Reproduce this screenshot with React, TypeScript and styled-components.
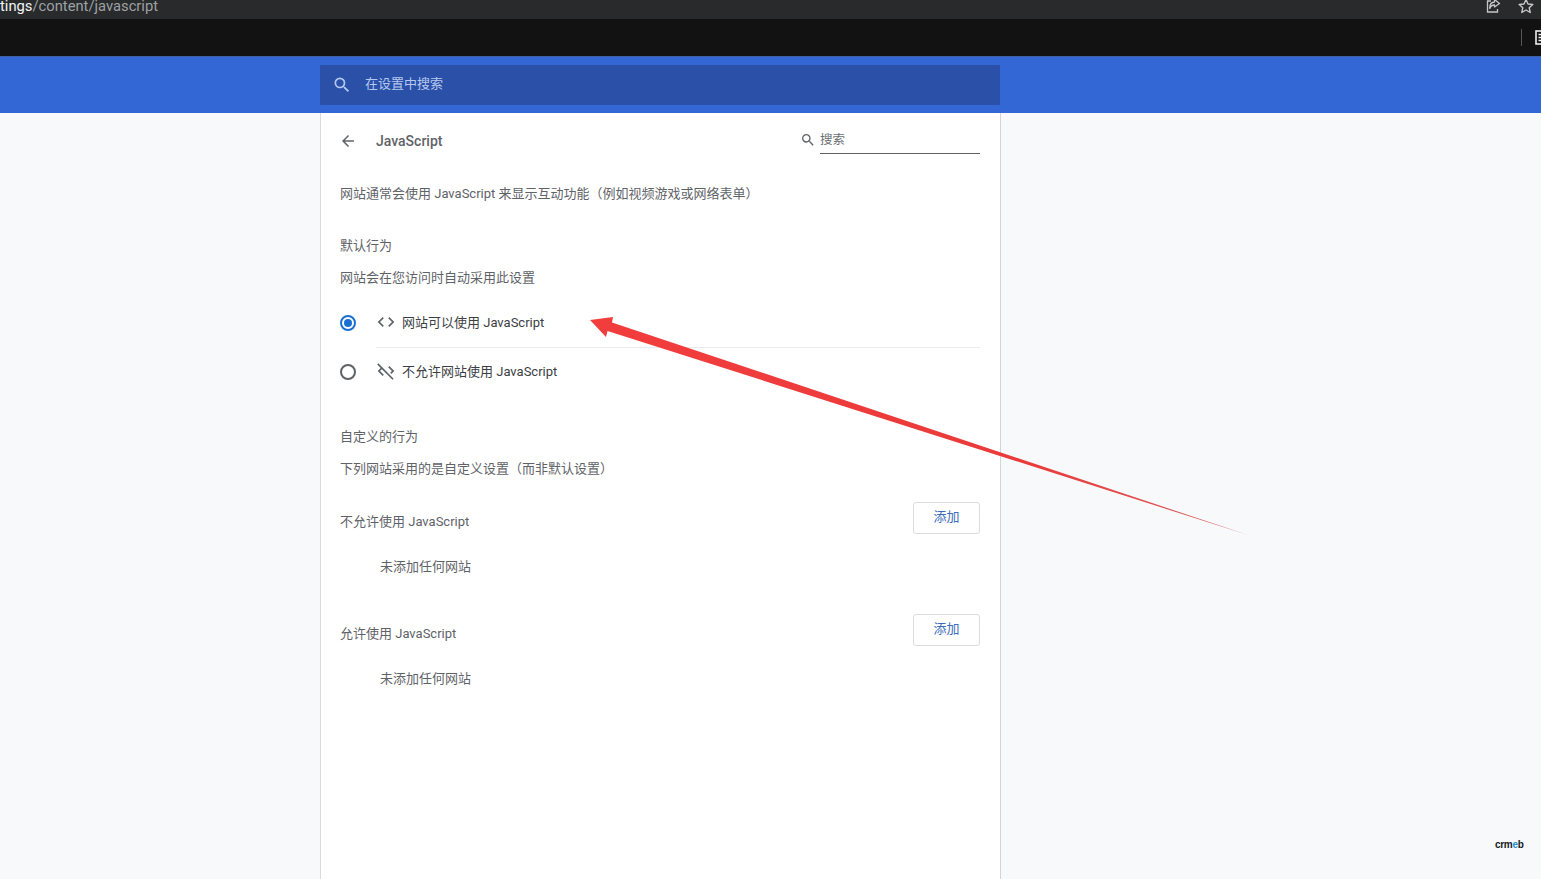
import React from "react";
import styled, { createGlobalStyle } from "styled-components";

const Global = createGlobalStyle`
  html, body { margin: 0; padding: 0; background: #f8f9fb; }
  body { font-family: Roboto, "Noto Sans CJK SC", sans-serif; overflow: hidden; }
  * { box-sizing: border-box; }
`;

const Page = styled.div`
  position: relative;
  width: 1541px;
  height: 879px;
  overflow: hidden;
  display: flex;
  flex-direction: column;
`;

const UrlBar = styled.div`
  height: 19px;
  flex: none;
  background: #292a2c;
  display: flex;
  justify-content: space-between;
  align-items: flex-end;
  overflow: hidden;
`;

const Url = styled.div`
  font: 14.75px/17px Roboto, sans-serif;
  color: #9ea1a5;
  padding-bottom: 4px;
  b { font-weight: 400; color: #f1f3f4; }
`;

const UrlActions = styled.div`
  display: flex;
  gap: 17px;
  padding: 0 7px 5px 0;
  color: #c4c7c9;
  svg { display: block; }
`;

const ExtBar = styled.div`
  height: 37px;
  flex: none;
  background: #121212;
  display: flex;
  justify-content: flex-end;
  align-items: center;
  gap: 13px;
`;

const ExtDivider = styled.span`
  width: 1px;
  height: 17px;
  background: #55585b;
`;

const ExtIcon = styled.span`
  width: 6px;
  height: 15px;
  overflow: hidden;
  display: block;
  color: #eee;
`;

const Banner = styled.div`
  height: 57px;
  flex: none;
  background: #3367d6;
  border-top: 1px solid #3f5f9f;
  display: flex;
  padding: 8px 0 0 320px;
`;

const SearchBox = styled.div`
  width: 680px;
  height: 40px;
  background: #2a50a8;
  color: #b5c8f0;
  display: flex;
  align-items: center;
  padding-left: 12px;
  gap: 13px;
  font-size: 13px;
  border-radius: 1px;
`;

const SearchLabel = styled.span`
  position: relative;
  top: -3px;
`;

const Card = styled.main`
  width: 681px;
  flex: 1;
  margin-left: 320px;
  background: #fff;
  border-left: 1px solid #d9dadc;
  border-right: 1px solid #d4d5d7;
  padding: 0 20px 0 19px;
  color: #5f6368;
  font-size: 13px;
`;

const Header = styled.div`
  height: 56px;
  display: flex;
  align-items: center;
`;

const BackIcon = styled.svg`
  width: 18px;
  height: 18px;
  margin: 0 19px 0 -1px;
  fill: #5f6368;
`;

const Title = styled.h1`
  flex: 1;
  margin: 0;
  font-size: 14px;
  font-weight: 500;
  color: #5f6368;
`;

const Filter = styled.div`
  width: 180px;
  display: flex;
  align-items: center;
  margin-top: -2px;
  svg { width: 16px; height: 16px; fill: #5f6368; margin-right: 4px; flex: none; }
`;

const FilterInput = styled.div`
  flex: 1;
  height: 27px;
  line-height: 26px;
  border-bottom: 1px solid #5f6368;
  margin-top: 1px;
  font-size: 12.5px;
  color: #6b6f73;
`;

const Line = styled.div<{ $mt?: number }>`
  height: 20px;
  line-height: 18px;
  margin-top: ${(p) => p.$mt ?? 0}px;
  white-space: nowrap;
`;

const RadioRow = styled.div<{ $h: number; $mt?: number }>`
  display: flex;
  align-items: center;
  height: ${(p) => p.$h}px;
  margin-top: ${(p) => p.$mt ?? 0}px;
`;

const RadioCircle = styled.span<{ $on?: boolean }>`
  width: 16px;
  height: 16px;
  flex: none;
  border-radius: 50%;
  border: 2px solid ${(p) => (p.$on ? "#1b6fd0" : "#5f6368")};
  display: flex;
  align-items: center;
  justify-content: center;
  &::after {
    content: "";
    width: 8px;
    height: 8px;
    border-radius: 50%;
    background: ${(p) => (p.$on ? "#1b6fd0" : "transparent")};
  }
`;

const RadioBody = styled.div<{ $divided?: boolean }>`
  flex: 1;
  align-self: stretch;
  margin-left: 20px;
  padding-bottom: 2px;
  display: flex;
  align-items: center;
  gap: 6px;
  color: #3c4043;
  border-bottom: ${(p) => (p.$divided ? "1px solid #ebecee" : "none")};
  svg { width: 20px; height: 20px; fill: #5f6368; flex: none; }
`;

const SiteHeader = styled.div<{ $mt: number }>`
  display: flex;
  justify-content: space-between;
  align-items: center;
  margin-top: ${(p) => p.$mt}px;
  height: 32px;
`;

const SiteTitle = styled.span`
  position: relative;
  top: 2px;
`;

const AddButton = styled.button`
  width: 67px;
  height: 32px;
  background: #fff;
  border: 1px solid #dadce0;
  border-radius: 3px;
  color: #3b6cb8;
  font: 13px Roboto, "Noto Sans CJK SC", sans-serif;
  padding: 0 0 5px;
`;

const Empty = styled.div`
  height: 20px;
  line-height: 18px;
  margin-top: 24px;
  padding-left: 40px;
`;

const ArrowOverlay = styled.svg`
  position: absolute;
  left: 0;
  top: 0;
  pointer-events: none;
`;

const Logo = styled.div`
  position: absolute;
  left: 1495px;
  top: 838px;
  font: 700 10px/14px "Liberation Sans", sans-serif;
  letter-spacing: -0.3px;
  color: #16181c;
  span { color: #1f8fd0; }
`;

const searchPath =
  "M15.5 14h-.79l-.28-.27A6.471 6.471 0 0 0 16 9.5 6.5 6.5 0 1 0 9.5 16c1.61 0 3.09-.59 4.23-1.57l.27.28v.79l5 4.99L20.49 19l-4.99-5zm-6 0C7.01 14 5 11.99 5 9.5S7.01 5 9.5 5 14 7.01 14 9.5 11.99 14 9.5 14z";

export default function App() {
  return (
    <Page>
      <Global />
      <UrlBar>
        <Url><b>tings</b>/content/javascript</Url>
        <UrlActions>
          <svg width="16" height="16" viewBox="0 0 16 16" fill="none" stroke="currentColor" strokeWidth="1.3">
            <path d="M6 3H2.5v11h10v-3" />
            <path d="M9.5 1.5 14.5 5.5 9.5 9V7C7 7 5.5 8.2 4.8 10.5 4.6 6.8 6.4 4.2 9.5 4Z" strokeLinejoin="round" />
          </svg>
          <svg width="16" height="16" viewBox="0 0 16 16" fill="none" stroke="currentColor" strokeWidth="1.4">
            <path d="M8 1.5 10 6l4.8.5-3.6 3.2 1 4.8L8 12l-4.2 2.5 1-4.8L1.2 6.5 6 6Z" strokeLinejoin="round" />
          </svg>
        </UrlActions>
      </UrlBar>
      <ExtBar>
        <ExtDivider />
        <ExtIcon>
          <svg width="15" height="15" viewBox="0 0 15 15" fill="none" stroke="currentColor" strokeWidth="1.6">
            <rect x="1" y="1" width="13" height="13" />
            <path d="M3.5 4.5h3M3.5 7.5h3M3.5 10.5h3" />
          </svg>
        </ExtIcon>
      </ExtBar>
      <Banner>
        <SearchBox>
          <svg width="20" height="20" viewBox="0 0 24 24" fill="currentColor"><path d={searchPath} /></svg>
          <SearchLabel>在设置中搜索</SearchLabel>
        </SearchBox>
      </Banner>
      <Card>
        <Header>
          <BackIcon viewBox="0 0 24 24"><path d="M20 11H7.83l5.59-5.59L12 4l-8 8 8 8 1.41-1.41L7.83 13H20v-2z" /></BackIcon>
          <Title>JavaScript</Title>
          <Filter>
            <svg viewBox="0 0 24 24"><path d={searchPath} /></svg>
            <FilterInput>搜索</FilterInput>
          </Filter>
        </Header>
        <Line $mt={16}>网站通常会使用 JavaScript 来显示互动功能（例如视频游戏或网络表单）</Line>
        <Line $mt={32}>默认行为</Line>
        <Line $mt={12}>网站会在您访问时自动采用此设置</Line>
        <RadioRow $h={50} $mt={9}>
          <RadioCircle $on />
          <RadioBody $divided>
            <svg viewBox="0 0 24 24"><path d="M9.4 16.6 4.8 12l4.6-4.6L8 6l-6 6 6 6 1.4-1.4zm5.2 0 4.6-4.6-4.6-4.6L16 6l6 6-6 6-1.4-1.4z" /></svg>
            网站可以使用 JavaScript
          </RadioBody>
        </RadioRow>
        <RadioRow $h={47}>
          <RadioCircle />
          <RadioBody>
            <svg viewBox="0 0 24 24"><path d="M19.17 12l-4.58-4.59L16 6l6 6-3.59 3.59L17 14.17 19.17 12zM1.39 4.22l4.19 4.19L2 12l6 6 1.41-1.41L4.83 12 7 9.83l12.78 12.78 1.41-1.41L2.81 2.81 1.39 4.22z" /></svg>
            不允许网站使用 JavaScript
          </RadioBody>
        </RadioRow>
        <Line $mt={33}>自定义的行为</Line>
        <Line $mt={12}>下列网站采用的是自定义设置（而非默认设置）</Line>
        <SiteHeader $mt={22}>
          <SiteTitle>不允许使用 JavaScript</SiteTitle>
          <AddButton>添加</AddButton>
        </SiteHeader>
        <Empty>未添加任何网站</Empty>
        <SiteHeader $mt={36}>
          <SiteTitle>允许使用 JavaScript</SiteTitle>
          <AddButton>添加</AddButton>
        </SiteHeader>
        <Empty>未添加任何网站</Empty>
      </Card>
      <ArrowOverlay width="1541" height="879" viewBox="0 0 1541 879">
        <defs>
          <linearGradient id="arrowFill" gradientUnits="userSpaceOnUse" x1="590" y1="320" x2="1248" y2="535">
            <stop offset="0" stopColor="#f23d3d" />
            <stop offset="0.65" stopColor="#ea3a3a" />
            <stop offset="1" stopColor="#d9605f" />
          </linearGradient>
        </defs>
        <polygon points="590,320 613,317 612,322.5 1248,535 607.5,331 606,337" fill="url(#arrowFill)" />
      </ArrowOverlay>
      <Logo>crm<span>e</span>b</Logo>
    </Page>
  );
}
